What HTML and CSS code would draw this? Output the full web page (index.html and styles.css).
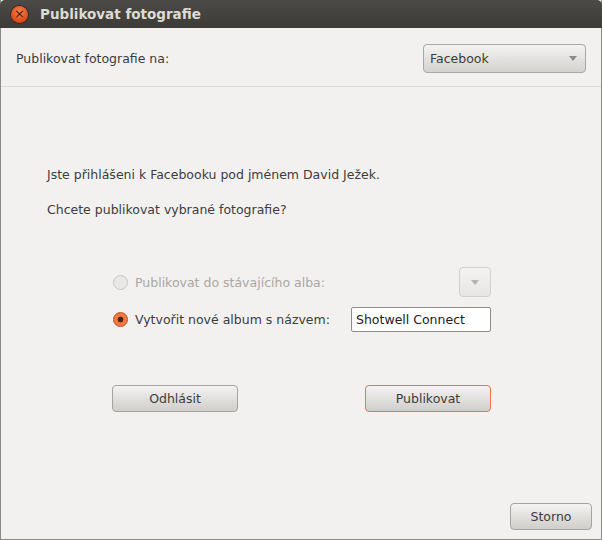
FILE: index.html
```html
<!DOCTYPE html>
<html lang="cs">
<head>
  <meta charset="UTF-8">
  <title>Publikovat fotografie</title>
  <link rel="stylesheet" href="styles.css">
</head>
<body>
  <div class="window">
    <div class="titlebar">
      <span class="close-btn">&times;</span>
      <span class="title">Publikovat fotografie</span>
    </div>

    <div class="service-row">
      <span>Publikovat fotografie na:</span>
      <div class="combo service-combo">
        <span>Facebook</span>
        <span class="arrow"></span>
      </div>
    </div>

    <div class="content">
      <p class="info">Jste přihlášeni k Facebooku pod jménem David Ježek.</p>
      <p class="info">Chcete publikovat vybrané fotografie?</p>

      <div class="options">
        <div class="option disabled">
          <span class="radio"></span>
          <span class="label">Publikovat do stávajícího alba:</span>
          <div class="combo small-combo"><span class="arrow"></span></div>
        </div>
        <div class="option">
          <span class="radio checked"></span>
          <span class="label">Vytvořit nové album s názvem:</span>
          <div class="entry">Shotwell Connect</div>
        </div>
      </div>

      <div class="actions">
        <button class="btn">Odhlásit</button>
        <button class="btn default">Publikovat</button>
      </div>
    </div>

    <div class="footer">
      <button class="btn storno">Storno</button>
    </div>
  </div>
</body>
</html>
```

FILE: styles.css
```css
html, body {
  margin: 0;
  padding: 0;
}
body {
  width: 602px;
  height: 540px;
  font-family: 'DejaVu Sans', sans-serif;
  font-size: 12.5px;
  color: #3c3c3c;
}
.window {
  width: 602px;
  height: 540px;
  box-sizing: border-box;
  background: #f2f1f0;
  border: 1px solid #8a8985;
  border-top: none;
  display: flex;
  flex-direction: column;
}
.titlebar {
  height: 28px;
  background: linear-gradient(#4b4a46, #3c3b37);
  border-radius: 5px 5px 0 0;
  display: flex;
  align-items: center;
  margin: 0 -1px;
}
.close-btn {
  width: 17px;
  height: 17px;
  margin-left: 11px;
  border-radius: 50%;
  background: radial-gradient(circle at 50% 35%, #f5804f, #dd4814 70%);
  box-shadow: 0 0 0 1px #2e2d2a;
  color: #4a1c08;
  font-size: 13px;
  line-height: 16px;
  text-align: center;
}
.title {
  margin-left: 12px;
  color: #dfdbd2;
  font-weight: bold;
  font-size: 13.5px;
}
.service-row {
  height: 55px;
  padding: 3px 15px 0 15px;
  display: flex;
  align-items: center;
  justify-content: space-between;
  border-bottom: 1px solid #dedcd9;
}
.combo {
  box-sizing: border-box;
  border: 1px solid #aaa8a4;
  border-radius: 4px;
  background: linear-gradient(#f4f3f2, #d4d2cf);
  display: flex;
  align-items: center;
  justify-content: space-between;
}
.service-combo {
  width: 163px;
  height: 29px;
  padding: 0 8px 0 6px;
}
.arrow {
  width: 0;
  height: 0;
  border-left: 4px solid transparent;
  border-right: 4px solid transparent;
  border-top: 5px solid #8d8b87;
}
.content {
  flex: 1;
  padding: 0 0 0 46px;
}
.info {
  margin: 0;
  line-height: 16px;
}
.info:first-child {
  margin-top: 80px;
}
.info + .info {
  margin-top: 19px;
}
.options {
  margin: 49px 0 0 66px;
  width: 378px;
  display: flex;
  flex-direction: column;
  gap: 10px;
}
.option {
  display: flex;
  align-items: center;
}
.option .label {
  flex: 1;
  margin-left: 7px;
}
.option.disabled {
  color: #a9a7a3;
}
.radio {
  width: 13px;
  height: 13px;
  border-radius: 50%;
  border: 1px solid #c9c7c3;
  background: #e9e8e6;
}
.radio.checked {
  border-color: #c44a14;
  background: radial-gradient(circle, #4a2414 2.6px, #f07746 3.2px);
}
.small-combo {
  width: 32px;
  height: 30px;
  justify-content: center;
  border-color: #d2d0cd;
  background: linear-gradient(#f4f3f2, #e7e6e4);
}
.small-combo .arrow {
  border-top-color: #b5b3af;
}
.entry {
  box-sizing: border-box;
  width: 140px;
  height: 25px;
  border: 1px solid #8f8d89;
  border-radius: 2px;
  background: #fff;
  color: #222;
  padding: 0 4px;
  line-height: 23px;
}
.actions {
  margin: 53px 0 0 65px;
  width: 379px;
  display: flex;
  justify-content: space-between;
}
.btn {
  font-family: 'DejaVu Sans', sans-serif;
  font-size: 12.5px;
  color: #3c3c3c;
  width: 126px;
  height: 27px;
  border: 1px solid #a6a4a0;
  border-radius: 4px;
  background: linear-gradient(#f4f3f2, #d0ceca);
  padding: 0;
}
.btn.default {
  border-color: #e8764a;
}
.footer {
  display: flex;
  justify-content: flex-end;
  padding: 0 9px 9px 0;
}
.btn.storno {
  width: 82px;
  height: 27px;
}
```
